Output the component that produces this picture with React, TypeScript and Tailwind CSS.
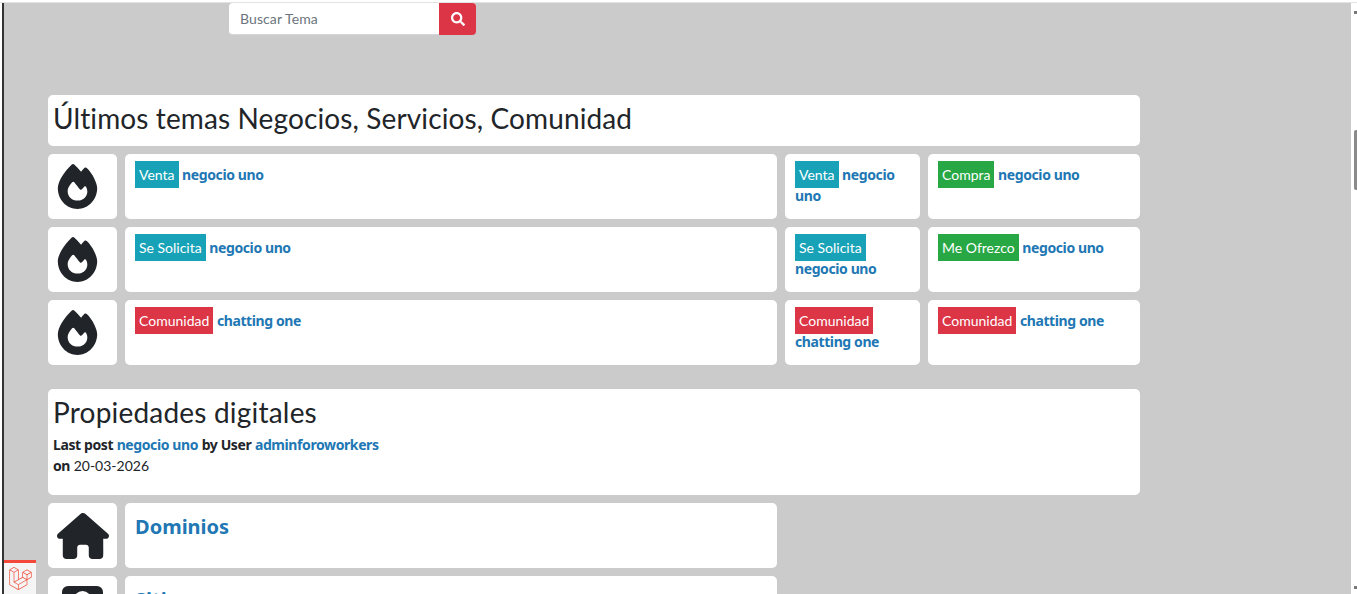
import { FaLaravel, FaSearch } from "react-icons/fa";
import { FaFire, FaHouse } from "react-icons/fa6";

const font = "font-['Lato','Noto_Sans',sans-serif]";
const bold = "font-['Noto_Sans',sans-serif] font-bold tracking-[-0.4px]";
const card = "bg-white rounded-[5px]";
const link = `text-[#2077b4] ${bold}`;

function Badge({ c, t }: { c: string; t: string }) {
  return <span className={`${c} text-white px-1 py-[5px] text-[14px]`}>{t}</span>;
}

function Cell({ c, t, l }: { c: string; t: string; l: string }) {
  return (
    <div className={`${card} px-2.5 pt-[10px] h-[65px] text-[14px] leading-[21px] overflow-hidden`}>
      <Badge c={c} t={t} /> <a className={link}>{l}</a>
    </div>
  );
}

function Icon() {
  return (
    <div className={`${card} h-[65px] flex items-center pl-[7px] text-[#212529]`}>
      <FaFire size={45} />
    </div>
  );
}

const rows = [
  ["bg-[#17a2b8]", "Venta", "negocio uno", "bg-[#17a2b8]", "Venta", "negocio uno", "bg-[#28a745]", "Compra", "negocio uno"],
  ["bg-[#17a2b8]", "Se Solicita", "negocio uno", "bg-[#17a2b8]", "Se Solicita", "negocio uno", "bg-[#28a745]", "Me Ofrezco", "negocio uno"],
  ["bg-[#dc3545]", "Comunidad", "chatting one", "bg-[#dc3545]", "Comunidad", "chatting one", "bg-[#dc3545]", "Comunidad", "chatting one"],
];

export default function App() {
  return (
    <div className={`${font} h-[594px] overflow-hidden flex flex-col bg-white text-[#212529]`}>
      <div className="h-[3px] bg-white border-b border-[#e3e3e3] shrink-0" />
      <div className="flex flex-1 min-h-0">
        <div className="w-1 shrink-0 bg-white border-l-2 border-[#333] ml-0.5 -mr-0.5" />
        <main className="relative flex-1 bg-[#cbcbcb] pl-[44px] min-w-0 overflow-hidden">
          <div className="flex ml-[181px] w-[247px] h-[32px]">
            <div className="flex-1 bg-white rounded-l-[4px] pl-[11px] text-[14px] tracking-[0.1px] leading-[31px] text-[#6c757d] border-b border-[#d5d8db]">Buscar Tema</div>
            <button className="w-[37px] bg-[#dc3545] text-white rounded-r-[4px] flex items-center justify-center"><FaSearch size={14} /></button>
          </div>
          <div className={`${card} w-[1092px] h-[51px] mt-[60px] pl-[5px] text-[28px] tracking-[0.12px] leading-[47px]`}>Últimos temas Negocios, Servicios, Comunidad</div>
          <div className="grid grid-cols-[69px_652px_135px_212px] gap-2 mt-2 w-[1092px]">
            {rows.map((r, i) => (
              <div key={i} className="contents">
                <Icon />
                <Cell c={r[0]} t={r[1]} l={r[2]} />
                <Cell c={r[3]} t={r[4]} l={r[5]} />
                <Cell c={r[6]} t={r[7]} l={r[8]} />
              </div>
            ))}
          </div>
          <div className={`${card} w-[1092px] h-[106px] mt-6 px-[5px] text-[14px] leading-[21px]`}>
            <h2 className="text-[28px] tracking-[0.2px] leading-[34px] pt-[6px] pb-[5px]">Propiedades digitales</h2>
            <div><b className={bold}>Last post</b> <a className={link}>negocio uno</a> <b className={bold}>by User</b> <a className={link}>adminforoworkers</a></div>
            <div><b className={bold}>on</b> 20-03-2026</div>
          </div>
          <div className="grid grid-cols-[69px_652px] gap-2 mt-2">
            <div className={`${card} h-[65px] flex items-center pl-[9px] text-[#212529]`}><FaHouse size={52} /></div>
            <div className={`${card} h-[65px] px-2.5 pt-[7px] text-[20px] leading-[34px] font-['Noto_Sans',sans-serif] font-bold text-[#2077b4]`}>Dominios</div>
            <div className={`${card} h-[65px] flex items-start justify-center pt-[10px] text-[#212529]`}>
              <svg width="41" height="41" viewBox="0 0 41 41" fill="currentColor"><path fillRule="evenodd" d="M6 0h29a6 6 0 0 1 6 6v29a6 6 0 0 1-6 6H6a6 6 0 0 1-6-6V6a6 6 0 0 1 6-6zM20.5 5a9 9 0 1 0 0 18a9 9 0 0 0 0-18z" /></svg>
            </div>
            <div className={`${card} h-[65px] px-2.5 pt-[7px] text-[20px] leading-[34px] font-['Noto_Sans',sans-serif] font-bold text-[#2077b4]`}>Sitios</div>
          </div>
          <div className="absolute left-0 bottom-0 w-8 h-[34px] bg-[#f5f5f5] border-t-[3px] border-[#f4493a] flex items-center justify-center text-[#f05340]">
            <FaLaravel size={23} />
          </div>
        </main>
        <aside className="relative w-1.5 bg-white shrink-0">
          <div className="absolute right-0 top-[127px] w-[3px] h-[60px] bg-[#8a8a8a] rounded-l-[2px]" />
          <div className="absolute right-0 top-[8px] w-[3px] h-[3px] bg-[#777]" />
          <div className="absolute right-0 bottom-[5px] w-[3px] h-[3px] bg-[#777]" />
        </aside>
      </div>
    </div>
  );
}
